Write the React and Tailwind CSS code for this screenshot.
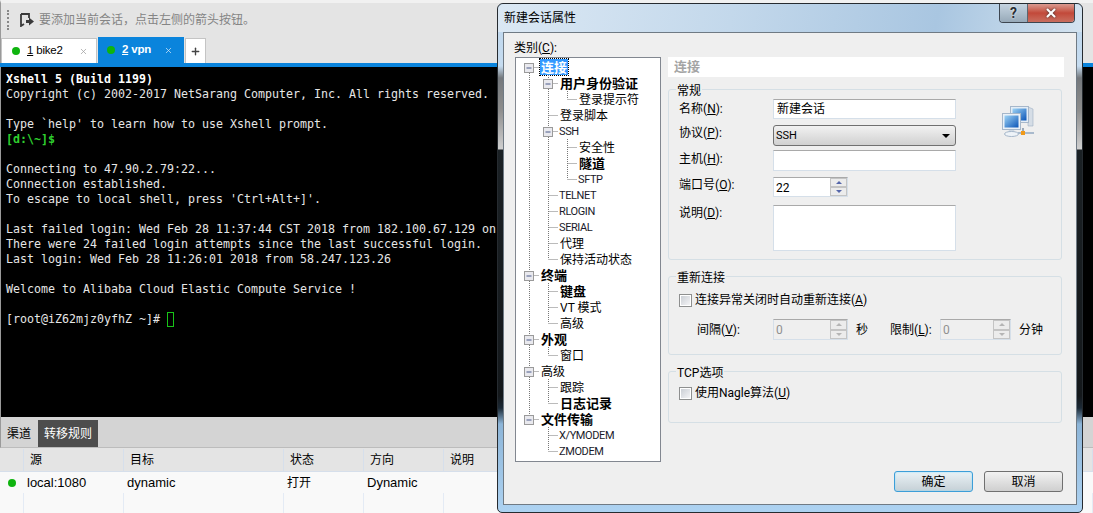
import React from "react";
import { X, Plus } from "lucide-react";

const sans = "font-['Liberation_Sans','Noto_Sans_CJK_SC',sans-serif]";
const ui = "font-['Roboto','Noto_Sans_CJK_SC',sans-serif]";

const terminalLines = [
    { text: "Xshell 5 (Build 1199)", bold: true },
    { text: "Copyright (c) 2002-2017 NetSarang Computer, Inc. All rights reserved." },
    { text: "" },
    { text: "Type `help' to learn how to use Xshell prompt." },
    { text: "[d:\\~]$", green: true },
    { text: "" },
    { text: "Connecting to 47.90.2.79:22..." },
    { text: "Connection established." },
    { text: "To escape to local shell, press 'Ctrl+Alt+]'." },
    { text: "" },
    { text: "Last failed login: Wed Feb 28 11:37:44 CST 2018 from 182.100.67.129 on ssh:notty" },
    { text: "There were 24 failed login attempts since the last successful login." },
    { text: "Last login: Wed Feb 28 11:26:01 2018 from 58.247.123.26" },
    { text: "" },
    { text: "Welcome to Alibaba Cloud Elastic Compute Service !" },
    { text: "" },
];

const treeRows = [
    { label: "连接", level: 0, open: true, bold: true, selected: true },
    { label: "用户身份验证", level: 1, open: true, bold: true },
    { label: "登录提示符", level: 2 },
    { label: "登录脚本", level: 1 },
    { label: "SSH", level: 1, open: true, latin: true },
    { label: "安全性", level: 2 },
    { label: "隧道", level: 2, bold: true },
    { label: "SFTP", level: 2, latin: true },
    { label: "TELNET", level: 1, latin: true },
    { label: "RLOGIN", level: 1, latin: true },
    { label: "SERIAL", level: 1, latin: true },
    { label: "代理", level: 1 },
    { label: "保持活动状态", level: 1 },
    { label: "终端", level: 0, open: true, bold: true },
    { label: "键盘", level: 1, bold: true },
    { label: "VT 模式", level: 1 },
    { label: "高级", level: 1 },
    { label: "外观", level: 0, open: true, bold: true },
    { label: "窗口", level: 1 },
    { label: "高级", level: 0, open: true },
    { label: "跟踪", level: 1 },
    { label: "日志记录", level: 1, bold: true },
    { label: "文件传输", level: 0, open: true, bold: true },
    { label: "X/YMODEM", level: 1, latin: true },
    { label: "ZMODEM", level: 1, latin: true },
];

const columns = [
    { label: "", width: "w-[24px]" },
    { label: "源", width: "w-[100px]" },
    { label: "目标", width: "w-[160px]" },
    { label: "状态", width: "w-[80px]" },
    { label: "方向", width: "w-[80px]" },
    { label: "说明", width: "flex-1" },
];

function hasNextSibling(index, col) {
    for (let j = index + 1; j < treeRows.length; j++) {
        if (treeRows[j].level <= col) return treeRows[j].level === col;
    }
    return false;
}

function TreeGuides({ index, level, open }) {
    const width = 19 * (level + 1);
    const lines = [];
    for (let c = 0; c <= level; c++) {
        const x = 19 * c + 9.5;
        const next = hasNextSibling(index, c);
        if (c < level && next) lines.push([x, 0, x, 16]);
        if (c === level) {
            if (index > 0) lines.push([x, 0, x, 8]);
            if (next) lines.push([x, 8, x, 16]);
            lines.push([x, 8.5, x + 9, 8.5]);
        }
    }
    const bx = 19 * level + 5;
    return (
        <svg width={width} height="16" className="shrink-0">
            {lines.map((l, i) => (
                <line key={i} x1={l[0]} y1={l[1]} x2={l[2]} y2={l[3]} stroke="#777" strokeDasharray="1 1" />
            ))}
            {open && (
                <g>
                    <rect x={bx - 0.5} y="4.5" width="9" height="9" fill="#e9e9ee" stroke="#9a9a9a" />
                    <line x1={bx + 1.5} y1="9" x2={bx + 6.5} y2="9" stroke="#4a5a8a" />
                </g>
            )}
        </svg>
    );
}

function TreeRow({ row, index }) {
    let text = "ml-px h-4 leading-[18px] text-[12px] text-black";
    if (row.bold) text = "ml-px h-4 leading-[18px] text-[13px] font-bold text-black";
    if (row.latin) text = "h-4 leading-[18px] text-[11px] tracking-[-0.4px] text-[#1a1a2a]";
    if (row.selected) text = "ml-px h-4 pt-px leading-[15px] text-[13px] font-bold bg-[#3399ff] text-white outline-1 outline-dotted outline-black";
    return (
        <div className="flex h-4 items-start">
            <TreeGuides index={index} level={row.level} open={row.open} />
            <span className={`px-px whitespace-nowrap ${text}`}>{row.label}</span>
        </div>
    );
}

function Label({ text, hot, className = "" }) {
    return (
        <span className={`text-[12px] leading-4 whitespace-nowrap text-black ${className}`}>
            {text}(<u>{hot}</u>):
        </span>
    );
}

function SpinArrows({ disabled }) {
    const arrow = disabled ? "border-[#b5b5b5]" : "border-[#5566aa]";
    const cell = "flex-1 flex items-center justify-center border border-[#c4c4c4] bg-[#ececec]";
    return (
        <div className="flex w-[17px] flex-col">
            <div className={cell}>
                <span className={`h-0 w-0 border-x-[3px] border-b-[3px] border-x-transparent ${arrow}`} />
            </div>
            <div className={cell}>
                <span className={`h-0 w-0 border-x-[3px] border-t-[3px] border-x-transparent ${arrow}`} />
            </div>
        </div>
    );
}

function Spinner({ value, disabled, width, height = "h-[21px]" }) {
    return (
        <div className={`flex ${height} ${width} border border-t-[#a9a9a9] border-x-[#d5dfe9] border-b-[#d5dfe9] ${disabled ? "bg-[#efefef]" : "bg-white"}`}>
            <span className={`flex-1 pl-[2px] text-[12px] leading-[20px] ${disabled ? "text-[#909090]" : "text-black"}`}>{value}</span>
            <SpinArrows disabled={disabled} />
        </div>
    );
}

function Input({ value, className = "h-[21px]" }) {
    return (
        <div className={`w-[183px] border border-t-[#a9a9a9] border-x-[#d5dfe9] border-b-[#d5dfe9] bg-white pl-[3px] text-[12px] leading-[19px] text-black ${className}`}>
            {value}
        </div>
    );
}

function Checkbox() {
    return (
        <span className="block h-[13px] w-[13px] shrink-0 border border-[#8e8f8f] bg-white p-px">
            <span className="block h-full w-full bg-gradient-to-br from-[#cbcfd5] to-[#f4f4f6]" />
        </span>
    );
}

function Group({ title, className, children }) {
    return (
        <fieldset className={`mr-[2px] rounded-[3px] border border-[#d5dfe5] ${className}`}>
            <legend className="ml-[7px] px-px text-[12px] leading-[13px] whitespace-nowrap text-black">
                <span className="relative top-[2px]">{title}</span>
            </legend>
            {children}
        </fieldset>
    );
}

function SessionIcon() {
    return (
        <svg width="34" height="34" viewBox="0 0 34 34">
            <defs>
                <linearGradient id="screen" x1="0" y1="0" x2="1" y2="1">
                    <stop offset="0" stopColor="#9fd4f5" />
                    <stop offset="1" stopColor="#0b55b8" />
                </linearGradient>
            </defs>
            <path d="M27 2l5 2v17h-5z" fill="#d5dde6" stroke="#9fb0c4" strokeWidth=".6" />
            <rect x="9.5" y="1.5" width="18" height="16" fill="#e4edf6" stroke="#a6b7ca" />
            <rect x="11.5" y="3.5" width="14" height="12" fill="url(#screen)" />
            <rect x="1.5" y="8.5" width="18" height="16" fill="#eaf1f8" stroke="#a6b7ca" />
            <rect x="3.5" y="10.5" width="14" height="12" fill="url(#screen)" />
            <path d="M8 25h5l1 2H7z" fill="#cdd7e2" />
            <ellipse cx="10.5" cy="29" rx="7" ry="2.5" fill="#eef3f8" stroke="#a6b7ca" />
            <path d="M17 28h16" stroke="#a9bacd" strokeWidth="2" />
            <path d="M22 23v4" stroke="#7f92a8" strokeWidth="1.5" />
            <rect x="20" y="26" width="4" height="4" fill="#f09a1a" />
        </svg>
    );
}

function WindowButtons() {
    return (
        <div className="flex h-[19px] self-start overflow-hidden rounded-b-[4px] border border-t-0 border-[#3d4650]">
            <div className="flex w-[28px] items-center justify-center border-r border-[#5c6670] bg-gradient-to-b from-[#c5d3df] via-[#aebfcd] to-[#97a9b8] text-[14px] leading-none font-bold text-[#2b3036] [text-shadow:0_0_2px_#fff]">
                ?
            </div>
            <div className="flex w-[46px] items-center justify-center bg-gradient-to-b from-[#d99a90] via-[#c2493a] to-[#c96e5f]">
                <X size={14} strokeWidth={3.5} className="text-white drop-shadow-[0_0_1px_#333]" />
            </div>
        </div>
    );
}

function Dialog() {
    return (
        <div className={`absolute top-[3px] left-[497px] flex h-[510px] w-[586px] flex-col rounded-t-[6px] rounded-b-[5px] border border-[#262b30] bg-[linear-gradient(to_bottom,#bcd5ec_0px,#c6dcf0_62px,#74787c_74px,#8c8c8c_105px,#cfcfcf_145px,#1b2125_146px,#14181b_392px,#1c2a36_404px,#8db5d8_420px,#aed3f2_510px)] px-[5px] pb-[7px] ${ui}`}>
            {/* glass caption */}
            <div className="-mx-[5px] flex h-[28px] rounded-t-[6px] bg-[linear-gradient(100deg,#dbe8f4_0%,#c3d8eb_40%,#a9c6e1_75%,#c5d9ea_92%,#d4e3f0_100%)] pr-[7px] pl-[6px]">
                <span className="flex-1 pt-[6px] text-[12px] leading-4 text-black">新建会话属性</span>
                <WindowButtons />
            </div>
            <div className="flex min-h-0 flex-1 gap-[7px] border border-[#6f7a84] bg-[#efefef] pt-[7px] pr-[12px] pl-[11px]">
                <div className="flex w-[146px] shrink-0 flex-col">
                    <span className="-ml-px text-[12px] leading-4 text-black">
                        类别(<u>C</u>):
                    </span>
                    <div className="mt-[1px] h-[405px] border border-[#828790] bg-white pt-px pl-[4px]">
                        {treeRows.map((row, i) => (
                            <TreeRow key={i} row={row} index={i} />
                        ))}
                    </div>
                </div>
                <div className="flex flex-1 flex-col pt-[17px]">
                    <div className="h-[20px] bg-white pl-[6px] text-[13px] leading-5 font-bold text-[#a4a4a4]">连接</div>
                    <Group title="常规" className="mt-[6px] h-[177px]">
                        <div className="flex">
                            <div className="flex w-[104px] flex-col pt-[5px] pl-[10px]">
                                <Label text="名称" hot="N" />
                                <Label text="协议" hot="P" className="mt-[8px]" />
                                <Label text="主机" hot="H" className="mt-[10px]" />
                                <Label text="端口号" hot="O" className="mt-[10px]" />
                                <Label text="说明" hot="D" className="mt-[12px]" />
                            </div>
                            <div className="flex flex-col pt-[3px]">
                                <Input value="新建会话" className="h-[20px]" />
                                <div className="mt-[6px] flex h-[21px] w-[183px] items-center justify-between rounded-[3px] border border-[#707070] bg-gradient-to-b from-[#f2f2f2] to-[#d0d0d0] pt-px pr-[5px] pl-[2px] text-[11px]">
                                    SSH
                                    <span className="h-0 w-0 border-x-[4px] border-t-[4px] border-x-transparent border-t-black" />
                                </div>
                                <div className="mt-[4px]">
                                    <Input />
                                </div>
                                <div className="mt-[6px]">
                                    <Spinner value="22" width="w-[75px]" height="h-[20px]" />
                                </div>
                                <div className="mt-[8px]">
                                    <Input className="h-[46px]" />
                                </div>
                            </div>
                            <div className="pt-[9px] pl-[45px]">
                                <SessionIcon />
                            </div>
                        </div>
                    </Group>
                    <Group title="重新连接" className="mt-[10px] h-[85px]">
                        <div className="mt-[9px] flex h-[16px] items-center gap-[3px] pl-[10px]">
                            <Checkbox />
                            <span className="text-[12px] text-black">
                                连接异常关闭时自动重新连接(<u>A</u>)
                            </span>
                        </div>
                        <div className="mt-[11px] flex items-center">
                            <Label text="间隔" hot="V" className="w-[104px] pl-[28px]" />
                            <Spinner value="0" disabled width="w-[75px]" />
                            <span className="ml-[8px] text-[12px] text-black">秒</span>
                            <Label text="限制" hot="L" className="ml-[22px] w-[50px]" />
                            <Spinner value="0" disabled width="w-[71px]" />
                            <span className="ml-[8px] text-[12px] text-black">分钟</span>
                        </div>
                    </Group>
                    <Group title="TCP选项" className="mt-[10px] h-[58px]">
                        <div className="mt-[7px] flex h-[16px] items-center gap-[3px] pl-[10px]">
                            <Checkbox />
                            <span className="text-[12px] text-black">
                                使用Nagle算法(<u>U</u>)
                            </span>
                        </div>
                    </Group>
                    <div className="mt-[48px] mr-[1px] flex justify-end gap-[11px]">
                        <button className="h-[21px] w-[79px] rounded-[3px] border border-[#3c9ed8] bg-gradient-to-b from-[#e9f2f6] to-[#c6d0d6] text-[12px] leading-none text-black shadow-[inset_0_0_2px_#8fdcff]">
                            确定
                        </button>
                        <button className="h-[21px] w-[79px] rounded-[3px] border border-[#707070] bg-gradient-to-b from-[#f2f2f2] to-[#cfcfcf] text-[12px] leading-none text-black">
                            取消
                        </button>
                    </div>
                </div>
            </div>
        </div>
    );
}

export default function App() {
    return (
        <div className={`relative flex h-[513px] w-[1093px] flex-col overflow-hidden bg-[#f9f9f9] ${sans}`}>
            {/* toolbar */}
            <div className="flex h-[37px] shrink-0 items-center border-t-[3px] border-l border-t-[#f1f1f1] border-l-[#9a9a9a] bg-[#e4e4e4] pl-[6px]">
                <div className="h-[20px] w-[2px] border-l-2 border-dotted border-[#888]" />
                <svg width="14" height="14" viewBox="0 0 14 14" className="ml-[11px]">
                    <path d="M1 1h8v4M1 1v12l3-2" fill="none" stroke="#3a3a3a" strokeWidth="1.8" />
                    <path d="M6 7h3V4.5L14 8.5 9 12.5V10H6z" fill="#3a3a3a" />
                </svg>
                <span className="ml-[5px] text-[12px] text-[#858585]">要添加当前会话，点击左侧的箭头按钮。</span>
            </div>
            {/* tabs */}
            <div className="flex h-[26px] shrink-0 items-end gap-[1px] border-l border-l-[#9a9a9a] bg-[#e4e4e4]">
                <div className="flex h-[25px] w-[96px] items-center border border-b-0 border-[#c4c4c4] bg-white pl-[10px] text-[11.5px] tracking-[-0.2px] text-black">
                    <span className="h-[8px] w-[8px] rounded-full bg-[#0fb40f]" />
                    <span className="ml-[7px]"><u>1</u> bike2</span>
                    <X size={9} className="ml-[16px] text-[#a0a0a0]" />
                </div>
                <div className="flex h-[26px] w-[86px] items-center bg-[#0a84dc] pl-[9px] text-[11.5px] font-bold tracking-[-0.2px] text-white">
                    <span className="h-[8px] w-[8px] rounded-full bg-[#0fb40f]" />
                    <span className="ml-[7px]"><u>2</u> vpn</span>
                    <X size={9} className="ml-[13px] text-[#cfe6f8]" />
                </div>
                <div className="flex h-[25px] w-[21px] items-center justify-center border border-b-0 border-[#c4c4c4] bg-white">
                    <Plus size={11} strokeWidth={3} className="text-[#444]" />
                </div>
            </div>
            <div className="h-[4px] shrink-0 bg-[#0a84dc]" />
            {/* terminal */}
            <div className="h-[350px] shrink-0 overflow-hidden border-l border-l-[#9a9a9a] bg-black pt-[5px] pl-[5px] font-['DejaVu_Sans_Mono',monospace] text-[11.63px] leading-[15px] whitespace-pre text-[#e6e6e6]">
                {terminalLines.map((line, i) => (
                    <div key={i} className={`h-[15px] ${line.bold ? "font-bold text-white" : ""} ${line.green ? "font-bold text-[#2fd02f]" : ""}`}>
                        {line.text}
                    </div>
                ))}
                <div className="flex h-[15px] items-center">
                    [root@iZ62mjz0yfhZ ~]#<span className="ml-[7px] h-[15px] w-[7px] border border-[#18c418]" />
                </div>
            </div>
            {/* bottom panel */}
            <div className="flex h-[31px] shrink-0 items-end border-l border-b border-l-[#9a9a9a] border-b-[#bcbcbc] bg-[#d4d4d4] pl-[6px] text-[12px]">
                <span className="w-[31px] pb-[5px] leading-4 text-black">渠道</span>
                <span className="h-[27px] w-[60px] bg-[#4d4d4d] pt-[2px] pl-[6px] leading-[25px] text-white">转移规则</span>
            </div>
            <div className="flex h-[24px] shrink-0 border-b border-[#d6dfeb] bg-[#e4e4e4] pt-[1px] text-[12px] leading-[23px] text-black">
                {columns.map((col, i) => (
                    <div key={i} className={`${col.width} border-r border-[#d6dfeb] pl-[6px]`}>{col.label}</div>
                ))}
            </div>
            <div className="flex h-[21px] shrink-0 items-center bg-[#f9f9f9] text-[13px] text-black">
                <div className="flex w-[24px] justify-center"><span className="h-[8px] w-[8px] rounded-full bg-[#0fb40f]" /></div>
                <div className="w-[100px] pl-[3px]">local:1080</div>
                <div className="w-[160px] pl-[3px]">dynamic</div>
                <div className="w-[80px] pl-[3px] text-[12px]">打开</div>
                <div className="w-[80px] pl-[3px]">Dynamic</div>
            </div>
            <div className="flex flex-1 bg-[#f9f9f9]">
                {columns.map((col, i) => (
                    <div key={i} className={`${col.width} border-r border-[#e4ebf5]`} />
                ))}
            </div>
            <Dialog />
        </div>
    );
}
